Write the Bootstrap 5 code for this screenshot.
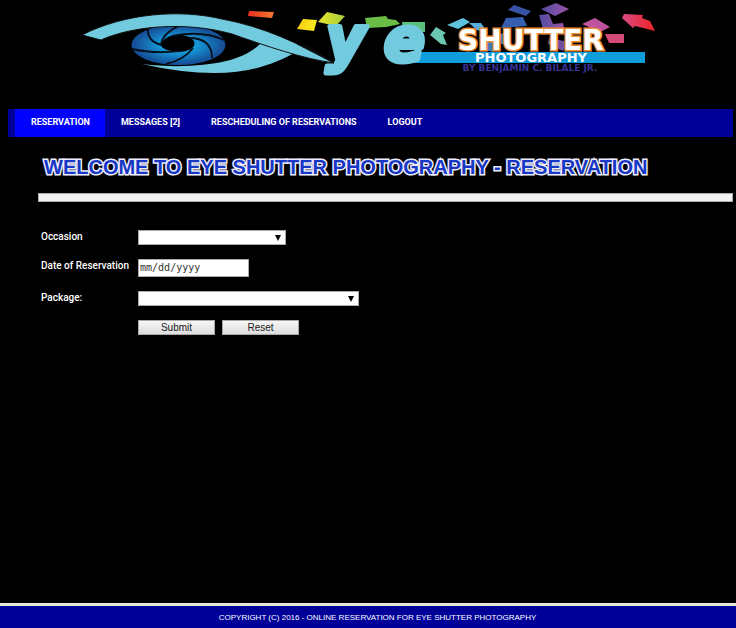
<!DOCTYPE html>
<html lang="en">
<head>
<meta charset="utf-8">
<meta name="viewport" content="width=device-width, initial-scale=1">
<title>Eye Shutter Photography - Reservation</title>
<link href="https://cdn.jsdelivr.net/npm/bootstrap@5.3.0/dist/css/bootstrap.min.css" rel="stylesheet">
<style>
body{background:#000;color:#fff;font:500 10px/14px Roboto,"Liberation Sans",sans-serif}
.site-header{padding-bottom:24px}
.main-nav{background:#009;margin:0 3px 0 8px;padding-left:7px}
.main-nav .nav-link{color:#fff;font-size:9px;font-weight:700;line-height:12px;padding:7px 15px 9px 16px}
.main-nav .nav-link.active{background:#00f}
.page-body{padding:0 3px 0 38px}
.page-title{font:700 20px/28px "Liberation Sans",sans-serif;color:#1737c4;-webkit-text-stroke:3px #eef;paint-order:stroke fill;stroke-linejoin:round;margin:16px 0 12px;padding-left:6px}
.rule-bar{height:9px;background:#f3f3f3;border:1px solid #aaa}
.booking{padding:28px 0 0 3px}
.booking .line{display:flex;align-items:flex-start;margin-bottom:14px}
.booking label,.booking .blank{width:97px;flex:none}
.booking select,.booking input{height:15px;border:1px solid #aaa;border-radius:0;background-color:#fff;color:#333;padding:0 2px;appearance:none}
.booking select{background-image:url("data:image/svg+xml,%3Csvg xmlns='http://www.w3.org/2000/svg' viewBox='0 0 6 6'%3E%3Cpath d='M0 0h6L3 6z'/%3E%3C/svg%3E");background-repeat:no-repeat;background-position:right 4px top 4px;background-size:6px 6px}
#occasion{width:148px}
#package{width:221px}
.booking #date{width:111px;height:18px;padding:0 1px;font:10px/16px "DejaVu Sans Mono","Liberation Mono",monospace}
#date::-webkit-calendar-picker-indicator{display:none}
#date::-webkit-datetime-edit-fields-wrapper{padding:0}
.btn-gap{gap:7px}
.push-btn{width:77px;height:15px;padding:0;border:1px solid #aaa;background:linear-gradient(#f6f6f6,#ddd);color:#222;font:10px/12px "Liberation Sans",sans-serif}
.site-footer{background:#009;border-top:3px solid #e8e8d8;font:8px/20px "Liberation Sans",sans-serif;padding:2px 0 0 19px}
</style>
<script src="https://cdn.jsdelivr.net/npm/bootstrap@5.3.0/dist/js/bootstrap.bundle.min.js"></script>
</head>
<body class="d-flex flex-column min-vh-100">
<header class="site-header">
<svg class="d-block w-100" viewBox="0 0 736 85" role="img" aria-label="Eye Shutter Photography by Benjamin C. Bilale Jr.">
<defs>
<radialGradient id="iris"><stop offset=".2" stop-color="#16b0ea"/><stop offset=".95" stop-color="#164f98"/></radialGradient>
<linearGradient id="red"><stop stop-color="#ed3024"/><stop offset="1" stop-color="#f37a2c"/></linearGradient>
<linearGradient id="yellow"><stop stop-color="#fccb12"/><stop offset="1" stop-color="#f6ee1e"/></linearGradient>
<linearGradient id="lime"><stop stop-color="#e5e42a"/><stop offset="1" stop-color="#a8ce3a"/></linearGradient>
<linearGradient id="violet"><stop stop-color="#514ba3"/><stop offset="1" stop-color="#9a55a8"/></linearGradient>
<linearGradient id="rose"><stop stop-color="#d84a85"/><stop offset="1" stop-color="#ed2224"/></linearGradient>
</defs>
<ellipse cx="178.500" cy="45" rx="47" ry="20" fill="url(#iris)"/>
<path d="M161 46C162 38 171 34 182 35C192 37 196 41 194 46C191 51 180 53 172 51Q164 50 161 46Z" fill="#000"/>
<g fill="none" stroke="#05101c" stroke-width="1.800"><path d="M148 28C147 38 153 43 162 45"/><path d="M179 26Q163 33 161 44"/><path d="M172 36Q202 30 224 40"/><path d="M189 38Q212 38 212 58"/><path d="M193 48Q184 60 166 64"/><path d="M132 49Q153 54 180 51"/></g>
<path d="M142 64C175 68 204 66 226 61C243 57 255 50 264 40L298 51C275 64 250 73 215 73Q181 73 142 64Z" fill="#71cade"/>
<path d="M249 11L274 12L272 18L248 16Z" fill="url(#red)"/>
<path d="M303 19L317 20L314 31L297 29Z" fill="url(#yellow)"/>
<path d="M327 12L345 16L336 26L318 22Z" fill="url(#lime)"/>
<path d="M365 18L386 16L388 19L396 20L400 24L386 27L367 28Z" fill="#6abd45"/>
<path d="M402 22H425V32H403Z" fill="#5cbf79"/>
<path d="M436 27L446 33L443 35L447 45L441 44L430 35Z" fill="#6bc7af"/>
<path d="M463 18L470 22L458 29L447 25Z" fill="#5dc2dc"/>
<path d="M469 23L481 23L488 33L477 30Z" fill="#58aee0"/>
<path d="M514 5L531 11L526 16L508 10Z" fill="#3752a4"/>
<path d="M506 18L523 17L527 26L501 28Z" fill="#355eb1"/>
<path d="M556 3L569 9L555 16L541 9Z" fill="url(#violet)"/>
<path d="M539 15L549 14L553 24L563 23L564 28L543 29Z" fill="url(#violet)"/>
<path d="M595 18L610 27L600 32L582 24Z" fill="#bf539e"/>
<path d="M624 14L643 15L642 18L650 21L655 31L635 26L633 28L622 18Z" fill="url(#rose)"/>
<path d="M482 42H498L493 52L481 49ZM500 34L511 31V44H501Z" fill="#4376bc"/><path d="M549 38L569 42L563 51L548 44Z" fill="#714ea1"/><path d="M605 34H624V43H609Z" fill="#d44a79"/>
<path d="M414 52H645V63H400Z" fill="#109ddb"/>
<g font-family="DejaVu Sans,sans-serif" font-weight="700" font-style="italic" font-size="60" stroke-linejoin="round" fill="#71cade" stroke="#71cade" stroke-width="5">
<text x="326" y="60">y</text>
<text x="384" y="61">e</text>
</g>
<path d="M82 35C125 13 180 9 222 19C265 27 300 44 334 63C304 59 266 46 232 34C185 21 132 26 101 40Z" fill="#71cade" stroke="#111" stroke-width="1"/>
<path d="M297 44L334 63M302 43L334 63" stroke="#111" stroke-width="1" fill="none"/>
<g font-family="DejaVu Sans,sans-serif" font-weight="700" text-anchor="middle">
<text x="531" y="50" font-size="28" fill="#fff" stroke="#ed9138" stroke-width="3" paint-order="stroke">SHUTTER</text>
<text x="531" y="62" font-size="13" fill="#fff">PHOTOGRAPHY</text>
<text x="530" y="71" font-size="9" fill="#343092">BY BENJAMIN C. BILALE JR.</text>
</g>
</svg>
</header>
<nav class="main-nav nav" aria-label="Main">
<a class="nav-link active" href="#reservation" aria-current="page">RESERVATION</a>
<a class="nav-link" href="#messages">MESSAGES [2]</a>
<a class="nav-link" href="#rescheduling">RESCHEDULING OF RESERVATIONS</a>
<a class="nav-link" href="#logout">LOGOUT</a>
</nav>
<main class="page-body flex-grow-1">
<h1 class="page-title">WELCOME TO EYE SHUTTER PHOTOGRAPHY - RESERVATION</h1>
<div class="rule-bar"></div>
<form class="booking" id="reservation">
<div class="line"><label for="occasion">Occasion</label><select id="occasion"><option></option><option>Wedding</option><option>Birthday</option></select></div>
<div class="line"><label for="date" class="text-nowrap">Date of Reservation</label><input type="date" id="date"></div>
<div class="line"><label for="package">Package:</label><select id="package"><option></option><option>Basic</option><option>Premium</option></select></div>
<div class="line"><span class="blank"></span><div class="d-flex btn-gap"><button type="submit" class="push-btn">Submit</button><button type="reset" class="push-btn">Reset</button></div></div>
</form>
</main>
<footer class="site-footer text-center">COPYRIGHT (C) 2016 - ONLINE RESERVATION FOR EYE SHUTTER PHOTOGRAPHY</footer>
</body>
</html>
